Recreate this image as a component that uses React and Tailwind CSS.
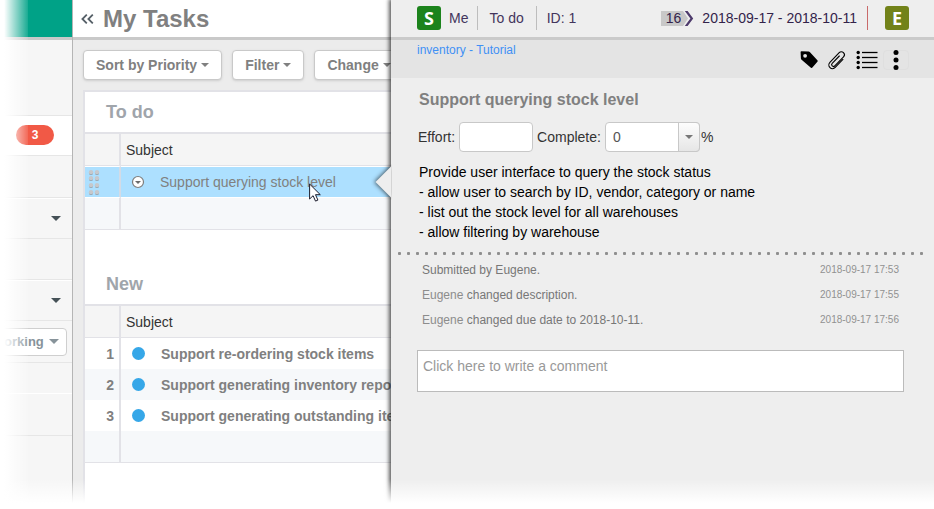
import { useState } from "react"

const NEW_TASKS = [
  { id: 1, subject: "Support re-ordering stock items" },
  { id: 2, subject: "Support generating inventory reports" },
  { id: 3, subject: "Support generating outstanding items" },
]

const ACTIVITY = [
  { id: 1, user: "", text: "Submitted by Eugene.", date: "2018-09-17 17:53" },
  { id: 2, user: "Eugene", text: " changed description.", date: "2018-09-17 17:55" },
  { id: 3, user: "Eugene", text: " changed due date to 2018-10-11.", date: "2018-09-17 17:56" },
]

const Caret = ({ className = "" }) => (
  <svg viewBox="0 0 8 4" className={`w-2 h-1 fill-current ${className}`} aria-hidden="true">
    <path d="M0 0h8L4 4z" />
  </svg>
)

const SidebarCaret = () => (
  <svg viewBox="0 0 10 5" className="w-[10px] h-[5px] fill-[#455157]" aria-hidden="true">
    <path d="M0 0h10L5 5z" />
  </svg>
)

const DragHandle = () => (
  <svg viewBox="0 0 12 26" className="w-3 h-[26px]" aria-hidden="true">
    {[4, 10, 17, 24].map((y) =>
      [3, 9].map((x) => (
        <g key={`${x}-${y}`}>
          <circle cx={x} cy={y} r="2" fill="#7f909c" />
          <circle cx={x} cy={y - 0.8} r="2.2" fill="#c6c8cc" />
        </g>
      )),
    )}
  </svg>
)

const StatusDot = () => <span className="w-[13px] h-[13px] rounded-full bg-[#36a7e8] shrink-0" />

function ToolbarButton({ children }) {
  return (
    <button
      type="button"
      className="flex items-center gap-1 h-[30px] px-3 shrink-0 rounded border border-[#c9c9c9] bg-white text-sm font-bold text-[#808080] shadow-sm whitespace-nowrap"
    >
      {children}
      <Caret />
    </button>
  )
}

function Sidebar() {
  return (
    <aside className="relative w-[73px] shrink-0 overflow-hidden border-r border-[#b5b5b5] bg-[#f6f6f6]">
      <div className="h-10 bg-[#00a287] border-b-[3px] border-[#c9c9c9]" />
      <div className="h-[75px]" />
      <div className="flex items-center h-[41px] pl-4 pb-px bg-white border-y border-[#e6e6e6]">
        <span className="w-[38px] h-5 rounded-full bg-[#f15946] text-white text-xs leading-5 font-bold text-center">
          3
        </span>
      </div>
      <div className="h-[42px] border-b border-[#e6e6e6]" />
      <div className="flex items-center justify-end h-[41px] pr-[11px] border-t border-b border-t-white border-b-[#e6e6e6]">
        <SidebarCaret />
      </div>
      <div className="h-[41px] border-b border-[#e6e6e6]" />
      <div className="flex items-center justify-end h-[41px] pr-[11px] border-t border-b border-t-white border-b-[#e6e6e6]">
        <SidebarCaret />
      </div>
      <div className="flex items-center h-[42px] border-b border-[#e6e6e6]">
        <div className="relative w-[67px]">
          <select
            aria-label="Status"
            className="appearance-none block -ml-5 w-[87px] h-7 pl-[11px] rounded border border-[#cfcfcf] bg-white text-[13px] font-bold text-[#87939a]"
          >
            <option>Working</option>
          </select>
          <svg
            viewBox="0 0 10 5"
            className="absolute right-2 top-[11px] w-[10px] h-[5px] fill-[#87939a] pointer-events-none"
            aria-hidden="true"
          >
            <path d="M0 0h10L5 5z" />
          </svg>
        </div>
      </div>
      <div className="h-[31px] border-b border-white" />
      <div className="h-[42px] border-b border-[#e6e6e6]" />
      <div className="absolute inset-y-0 left-0 w-7 bg-linear-to-r from-white from-15% to-white/10 pointer-events-none" />
    </aside>
  )
}

function TaskSection({ title, children }) {
  return (
    <section>
      <h2 className="h-[42px] pl-[21px] border-b-2 border-[#e2e2e7] text-lg leading-10 font-bold text-[#a0a5ab]">
        {title}
      </h2>
      <table className="w-full table-fixed border-separate border-spacing-0 text-sm whitespace-nowrap">
        <thead>
          <tr className="h-8 bg-[#f5f5f5]">
            <th className="w-9 border-r-2 border-b border-[#e2e2e7] p-0" aria-label="Order" />
            <th className="border-b border-[#e2e2e7] p-0 pl-[5px] text-left font-normal text-[#333]">Subject</th>
          </tr>
        </thead>
        <tbody>
          {children}
          <tr className="h-8 bg-[#f6f8fa]">
            <td className="border-r-2 border-b border-[#e2e2e7] p-0" />
            <td className="border-b border-[#e2e2e7] p-0" />
          </tr>
        </tbody>
      </table>
    </section>
  )
}

function TaskList() {
  return (
    <main className="flex flex-col w-[318px] shrink-0 overflow-hidden bg-[#ececec]">
      <header className="flex items-center h-10 pl-2 gap-[9px] bg-white border-b-[3px] border-[#c9c9c9]">
        <button type="button" aria-label="Collapse" className="text-[#566068]">
          <svg viewBox="0 0 13 10" className="w-[13px] h-[10px] fill-none stroke-current" strokeWidth="1.8">
            <path d="M5.8 0.6 1.4 5l4.4 4.4M11.8 0.6 7.4 5l4.4 4.4" />
          </svg>
        </button>
        <h1 className="text-2xl font-bold text-[#808080]">My Tasks</h1>
      </header>
      <div className="flex gap-[10px] py-[10px] pl-[10px]">
        <ToolbarButton>Sort by Priority</ToolbarButton>
        <ToolbarButton>Filter</ToolbarButton>
        <ToolbarButton>Change</ToolbarButton>
      </div>
      <div className="flex flex-col flex-1 gap-[34px] ml-[10px] border-l-2 border-t-2 border-[#e2e2e7] bg-white">
        <TaskSection title="To do">
          <tr className="h-8 bg-[#ade0ff] text-[#808080]">
            <td className="border-r-2 border-r-[#d3dbe6] border-y border-y-white p-0 pl-[3px]">
              <DragHandle />
            </td>
            <td className="border-y border-white p-0 pl-[10px]">
              <div className="relative flex items-center gap-[15px]">
                <svg viewBox="0 0 14 14" className="w-[14px] h-[14px]" aria-hidden="true">
                  <circle cx="7" cy="7" r="5.5" fill="#fff" stroke="#7d7d7d" strokeWidth="1.2" />
                  <path d="M4 6h6L7 9z" fill="#6a6a6a" />
                </svg>
                <span>Support querying stock level</span>
                <svg viewBox="0 0 12 19" className="absolute left-[178px] top-[11px] w-3 h-[19px]" aria-hidden="true">
                  <path
                    d="M.6 1v15l3.5-3.3 2.4 5.4 2.4-1-2.4-5.4h4.8z"
                    fill="#fff"
                    stroke="#1c1c2c"
                    strokeWidth="1"
                  />
                </svg>
              </div>
            </td>
          </tr>
        </TaskSection>
        <TaskSection title="New">
          {NEW_TASKS.map((task) => (
            <tr key={task.id} className="h-[31px] even:bg-[#f6f8fa] font-bold text-[#808080]">
              <td className="border-r-2 border-[#e2e2e7] p-0 pr-[5px] text-right">{task.id}</td>
              <td className="p-0 pl-[11px]">
                <div className="flex items-center gap-4">
                  <StatusDot />
                  <span>{task.subject}</span>
                </div>
              </td>
            </tr>
          ))}
        </TaskSection>
      </div>
    </main>
  )
}

function DetailHeader() {
  return (
    <header className="flex items-start h-10 pt-[6px] pl-[26px] pr-[25px] border-b-[3px] border-[#cacaca] text-sm leading-6 text-[#43355c] whitespace-nowrap">
      <span className="w-6 h-6 rounded-[3px] bg-[#1c831c] text-white text-lg leading-6 font-bold text-center font-['Open_Sans',sans-serif]">
        S
      </span>
      <span className="pl-2 pr-[9px]">Me</span>
      <span className="h-6 pl-[11px] pr-3 border-l border-[#bdbdbd]">To do</span>
      <span className="h-6 pl-[10px] border-l border-[#bdbdbd]">ID: 1</span>
      <div className="flex items-center ml-auto h-6 pr-[10px] border-r border-[#c96a6a] text-[#33234a]">
        <span className="h-[15px] pl-[5px] bg-[#c8c8c8] leading-[15px]">16</span>
        <svg viewBox="0 0 13 15" className="w-[13px] h-[15px] mr-2" aria-hidden="true">
          <path d="M0 0h2l5 7.5L2 15H0z" fill="#c8c8c8" />
          <path d="M3.8 0h2.8l5.6 7.5L6.6 15H3.8l5.6-7.5z" fill="#4d3a6b" />
        </svg>
        <span>2018-09-17 - 2018-10-11</span>
      </div>
      <span className="ml-[17px] w-6 h-6 rounded-[3px] bg-[#728219] text-white text-lg leading-6 font-bold text-center font-['Open_Sans',sans-serif]">
        E
      </span>
    </header>
  )
}

function DetailActions() {
  return (
    <div className="flex items-center gap-[9px]">
      <button type="button" aria-label="Tags">
        <svg viewBox="0 0 18 18" className="w-[18px] h-[18px]">
          <path
            fillRule="evenodd"
            d="M.6 1Q.6.2 1.4.2L8.6.5q.8.1 1.4.7l7.4 8.1q.7.8 0 1.5l-5 5.8q-.7.8-1.5.1L1.6 8.8q-.6-.6-.7-1.4zM5.1 2.9a1.9 1.9 0 1 0 0 3.8 1.9 1.9 0 0 0 0-3.8z"
          />
        </svg>
      </button>
      <button type="button" aria-label="Attachments">
        <svg viewBox="-10 -10 20 20" className="w-5 h-5 fill-none stroke-black" strokeWidth="1.1" strokeLinecap="round">
          <path
            transform="rotate(44)"
            d="M3.9-4.5V6.6a3.7 3.7 0 0 1-7.4 0V-6.8a3 3 0 0 1 6 0V5.8a1.8 1.8 0 0 1-3.6 0V-4.5"
          />
        </svg>
      </button>
      <button type="button" aria-label="Checklist">
        <svg viewBox="0 0 22 20" className="w-[22px] h-5">
          {[2.5, 7.5, 12.5, 17.5].map((y) => (
            <g key={y}>
              <circle cx="2.2" cy={y} r="1.7" />
              <path d={`M6 ${y}h15.5`} stroke="#000" strokeWidth="1.3" />
            </g>
          ))}
        </svg>
      </button>
      <button
        type="button"
        aria-label="More"
        className="flex items-center justify-center w-[26px] h-5 -ml-1 rounded border border-[#dfdfdf]"
      >
        <svg viewBox="0 0 6 20" className="w-[6px] h-5 shrink-0">
          <circle cx="3" cy="2.6" r="2.5" />
          <circle cx="3" cy="10" r="2.5" />
          <circle cx="3" cy="17.4" r="2.5" />
        </svg>
      </button>
    </div>
  )
}

function TaskDetail() {
  const [effort, setEffort] = useState("")
  const [complete, setComplete] = useState("0")
  const [comment, setComment] = useState("")

  return (
    <section className="relative flex-1 min-w-0 bg-[#eee] shadow-[-1px_0_4px_1px_rgba(0,0,0,0.65)]">
      <svg viewBox="0 0 20 36" className="absolute -left-5 top-[164px] w-[21px] h-9 overflow-hidden" aria-hidden="true">
        <path d="M20 2 4 18l16 16z" fill="#eee" className="drop-shadow-[-1px_0_2px_rgba(0,0,0,0.65)]" />
      </svg>

      <DetailHeader />

      <div className="flex items-start justify-between h-[38px] pl-[26px] pr-[25px] bg-[#e4e4e4]">
        <a href="#" className="pt-[2px] text-xs leading-4 text-[#3f90f5]">
          inventory - Tutorial
        </a>
        <div className="pt-[10px]">
          <DetailActions />
        </div>
      </div>

      <div className="pl-7 pt-3 text-sm">
        <h2 className="text-base leading-5 font-bold text-[#808080]">Support querying stock level</h2>
        <form className="flex items-center mt-3 -ml-px gap-1 text-[#333]">
          <label htmlFor="effort">Effort:</label>
          <input
            id="effort"
            type="text"
            value={effort}
            onChange={(e) => setEffort(e.target.value)}
            className="w-[74px] h-[30px] px-2 rounded border border-[#c8c8c8] bg-white"
          />
          <label htmlFor="complete">Complete:</label>
          <div className="relative">
            <select
              id="complete"
              value={complete}
              onChange={(e) => setComplete(e.target.value)}
              className="appearance-none block w-[95px] h-[30px] pl-[7px] rounded border border-[#c8c8c8] bg-white text-[#555]"
            >
              <option>0</option>
              <option>50</option>
              <option>100</option>
            </select>
            <span className="absolute right-0 inset-y-0 flex items-center justify-center w-[22px] rounded-r border border-[#c8c8c8] bg-linear-to-b from-[#fdfdfd] to-[#e6e6e6] text-[#777] pointer-events-none">
              <Caret />
            </span>
          </div>
          <span className="-ml-[3px]">%</span>
        </form>
        <div className="mt-[10px] leading-5 text-black">
          <p>Provide user interface to query the stock status</p>
          <p>- allow user to search by ID, vendor, category or name</p>
          <p>- list out the stock level for all warehouses</p>
          <p>- allow filtering by warehouse</p>
        </div>
      </div>

      <div className="mt-[10px] ml-[7px] mr-[10px] h-[3px] bg-[radial-gradient(circle_at_1.5px_1.5px,#8f8f8f_1.3px,transparent_1.8px)] bg-[length:9px_3px]" />

      <ul className="mt-[2px] pl-[31px] pr-[35px]">
        {ACTIVITY.map((entry) => (
          <li key={entry.id} className="flex items-center justify-between h-[25px] text-xs text-[#777]">
            <p>
              <span className="text-[#8c8c8c]">{entry.user}</span>
              {entry.text}
            </p>
            <time className="text-[10px] text-[#919191]">{entry.date}</time>
          </li>
        ))}
      </ul>

      <div className="mt-[18px] pl-[26px] pr-[30px]">
        <textarea
          aria-label="Comment"
          placeholder="Click here to write a comment"
          value={comment}
          onChange={(e) => setComment(e.target.value)}
          className="block w-full h-[42px] px-[5px] py-[5px] resize-none border border-[#bbb] bg-white text-sm placeholder:text-[#999]"
        />
      </div>
    </section>
  )
}

export default function App() {
  return (
    <div className="relative flex min-h-screen overflow-hidden bg-white font-['Liberation_Sans',Arial,sans-serif]">
      <Sidebar />
      <TaskList />
      <TaskDetail />
      <div className="absolute inset-x-0 bottom-0 h-[30px] bg-linear-to-b from-white/0 to-white to-80% pointer-events-none" />
    </div>
  )
}
